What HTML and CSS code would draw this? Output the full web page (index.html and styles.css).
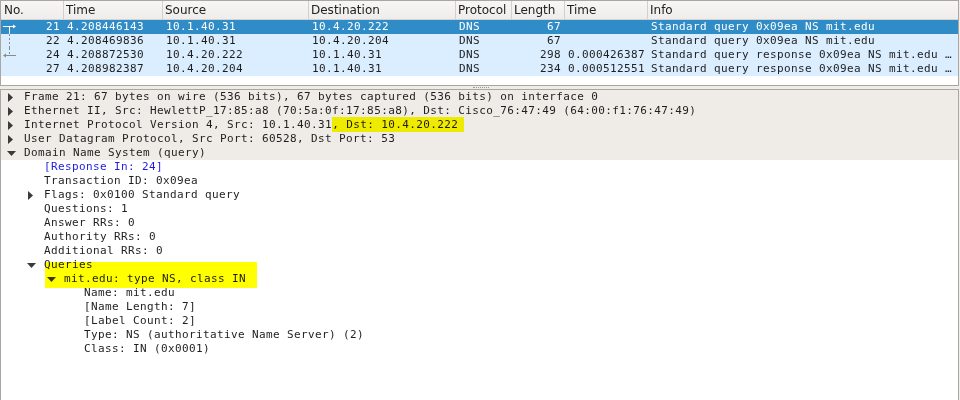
FILE: index.html
```html
<!DOCTYPE html>
<html>
<head>
<meta charset="utf-8">
<link rel="stylesheet" href="styles.css">
</head>
<body>
<div class="plist">
  <div class="phead">
    <div class="hc">No.</div>
    <div class="hc">Time</div>
    <div class="hc">Source</div>
    <div class="hc">Destination</div>
    <div class="hc">Protocol</div>
    <div class="hc">Length</div>
    <div class="hc">Time</div>
    <div class="hc">Info</div>
  </div>
  <div class="prow sel">
    <div class="c no"><svg class="rel" width="16" height="14" viewBox="0 0 16 14"><path d="M2 6.5H13M8.5 6.5V14" stroke="#fff" stroke-width="1" fill="none"/><path d="M12 4.5L15 6.5L12 8.5Z" fill="#fff"/></svg><span>21</span></div>
    <div class="c">4.208446143</div>
    <div class="c">10.1.40.31</div>
    <div class="c">10.4.20.222</div>
    <div class="c">DNS</div>
    <div class="c r">67</div>
    <div class="c"></div>
    <div class="c">Standard query 0x09ea NS mit.edu</div>
  </div>
  <div class="prow">
    <div class="c no"><svg class="rel" width="16" height="14" viewBox="0 0 16 14"><path d="M8.5 0V14" stroke="#8a8a8a" stroke-width="1" stroke-dasharray="2 2" fill="none"/></svg><span>22</span></div>
    <div class="c">4.208469836</div>
    <div class="c">10.1.40.31</div>
    <div class="c">10.4.20.204</div>
    <div class="c">DNS</div>
    <div class="c r">67</div>
    <div class="c"></div>
    <div class="c">Standard query 0x09ea NS mit.edu</div>
  </div>
  <div class="prow">
    <div class="c no"><svg class="rel" width="16" height="14" viewBox="0 0 16 14"><path d="M8.5 0V7.5" stroke="#8a8a8a" stroke-width="1" stroke-dasharray="2 2" fill="none"/><path d="M4 7.5H15" stroke="#8a8a8a" stroke-width="1" fill="none"/><path d="M2 7.5L5 5.5L5 9.5Z" fill="#8a8a8a"/></svg><span>24</span></div>
    <div class="c">4.208872530</div>
    <div class="c">10.4.20.222</div>
    <div class="c">10.1.40.31</div>
    <div class="c">DNS</div>
    <div class="c r">298</div>
    <div class="c">0.000426387</div>
    <div class="c">Standard query response 0x09ea NS mit.edu …</div>
  </div>
  <div class="prow">
    <div class="c no"><span>27</span></div>
    <div class="c">4.208982387</div>
    <div class="c">10.4.20.204</div>
    <div class="c">10.1.40.31</div>
    <div class="c">DNS</div>
    <div class="c r">234</div>
    <div class="c">0.000512551</div>
    <div class="c">Standard query response 0x09ea NS mit.edu …</div>
  </div>
  <div class="pfill"></div>
</div>
<div class="splitter"><span class="grip"></span></div>
<div class="details">
  <div class="drow top l0"><span class="tg rt"><svg width="5" height="9"><path d="M0 0L5 4.5L0 9Z"/></svg></span><span class="t">Frame 21: 67 bytes on wire (536 bits), 67 bytes captured (536 bits) on interface 0</span></div>
  <div class="drow top l0"><span class="tg rt"><svg width="5" height="9"><path d="M0 0L5 4.5L0 9Z"/></svg></span><span class="t">Ethernet II, Src: HewlettP_17:85:a8 (70:5a:0f:17:85:a8), Dst: Cisco_76:47:49 (64:00:f1:76:47:49)</span></div>
  <div class="drow top l0"><span class="tg rt"><svg width="5" height="9"><path d="M0 0L5 4.5L0 9Z"/></svg></span><span class="t">Internet Protocol Version 4, Src: 10.1.40.31<span class="hl">, Dst: 10.4.20.222</span></span></div>
  <div class="drow top l0"><span class="tg rt"><svg width="5" height="9"><path d="M0 0L5 4.5L0 9Z"/></svg></span><span class="t">User Datagram Protocol, Src Port: 60528, Dst Port: 53</span></div>
  <div class="drow top l0"><span class="tg dn"><svg width="9" height="5"><path d="M0 0H9L4.5 5Z"/></svg></span><span class="t">Domain Name System (query)</span></div>
  <div class="drow l1"><span class="tg"></span><span class="t link">[Response In: 24]</span></div>
  <div class="drow l1"><span class="tg"></span><span class="t">Transaction ID: 0x09ea</span></div>
  <div class="drow l1"><span class="tg rt"><svg width="5" height="9"><path d="M0 0L5 4.5L0 9Z"/></svg></span><span class="t">Flags: 0x0100 Standard query</span></div>
  <div class="drow l1"><span class="tg"></span><span class="t">Questions: 1</span></div>
  <div class="drow l1"><span class="tg"></span><span class="t">Answer RRs: 0</span></div>
  <div class="drow l1"><span class="tg"></span><span class="t">Authority RRs: 0</span></div>
  <div class="drow l1"><span class="tg"></span><span class="t">Additional RRs: 0</span></div>
  <div class="drow l1 hlrow"><span class="qhl"></span><span class="tg dn"><svg width="9" height="5"><path d="M0 0H9L4.5 5Z"/></svg></span><span class="t">Queries</span></div>
  <div class="drow l2"><span class="tg dn"><svg width="9" height="5"><path d="M0 0H9L4.5 5Z"/></svg></span><span class="t">mit.edu: type NS, class IN</span></div>
  <div class="drow l3"><span class="tg"></span><span class="t">Name: mit.edu</span></div>
  <div class="drow l3"><span class="tg"></span><span class="t">[Name Length: 7]</span></div>
  <div class="drow l3"><span class="tg"></span><span class="t">[Label Count: 2]</span></div>
  <div class="drow l3"><span class="tg"></span><span class="t">Type: NS (authoritative Name Server) (2)</span></div>
  <div class="drow l3"><span class="tg"></span><span class="t">Class: IN (0x0001)</span></div>
</div>
</body>
</html>
```

FILE: styles.css
```css
html, body {
  margin: 0;
  padding: 0;
}
body {
  width: 960px;
  height: 400px;
  overflow: hidden;
  background: #efebe7;
  font-family: "DejaVu Sans Mono", monospace;
  color: #1e1e1e;
}

/* packet list */
.plist {
  width: 959px;
  box-sizing: border-box;
  border: 1px solid #aaa6a1;
  background: #ffffff;
}
.phead, .prow {
  display: grid;
  grid-template-columns: 62px 99px 146px 147px 56px 53px 83px 1fr;
}
.phead {
  height: 19px;
  box-sizing: border-box;
  border-bottom: 1px solid #d6d2cd;
  background: linear-gradient(#f7f6f5, #efedeb);
  font-family: "DejaVu Sans", sans-serif;
  font-size: 12px;
  line-height: 18px;
  color: #222;
}
.hc {
  padding-left: 2px;
  border-left: 1px solid #d3cfca;
  white-space: nowrap;
  overflow: hidden;
}
.hc:first-child {
  border-left: none;
  padding-left: 3px;
}
.prow {
  height: 14px;
  background: #daeeff;
  font-size: 11px;
  letter-spacing: 0.38px;
  line-height: 14px;
  color: #1e1e1e;
}
.prow.sel {
  background: #308cc6;
  color: #ffffff;
}
.c {
  padding-left: 4px;
  white-space: pre;
  overflow: hidden;
}
.c.r {
  text-align: right;
  padding-left: 0;
  padding-right: 3px;
}
.c.no {
  display: flex;
  align-items: center;
  padding-left: 0;
  padding-right: 3px;
}
.c.no span {
  margin-left: auto;
}
.rel {
  display: block;
  flex: none;
}
.pfill {
  height: 9px;
}

/* splitter */
.splitter {
  height: 3px;
  display: flex;
  justify-content: center;
  align-items: center;
}
.grip {
  width: 16px;
  height: 0;
  border-top: 1px dotted #9c9892;
  margin-left: 2px;
}

/* details */
.details {
  width: 959px;
  height: 311px;
  box-sizing: border-box;
  border: 1px solid #aaa6a1;
  border-bottom: none;
  background: #ffffff;
  font-size: 11px;
  letter-spacing: 0.38px;
  line-height: 14px;
}
.drow {
  position: relative;
  height: 14px;
  display: flex;
  align-items: center;
  padding-left: 3px;
  white-space: pre;
}
.drow.top {
  background: #efebe7;
}
.drow.l1 { padding-left: 23px; }
.drow.l2 { padding-left: 43px; }
.drow.l3 { padding-left: 63px; }
.tg {
  width: 20px;
  height: 14px;
  flex: none;
  display: flex;
  align-items: center;
}
.tg svg {
  display: block;
  fill: #3a3a3a;
}
.tg.rt { padding-left: 4px; box-sizing: border-box; }
.tg.dn { padding-left: 3px; box-sizing: border-box; }
.t {
  line-height: 14px;
}
.link {
  color: #1c1ce0;
}
.hl {
  position: relative;
  display: inline-block;
  line-height: 14px;
}
.hl::after {
  content: "";
  position: absolute;
  left: 0;
  right: -6px;
  top: -1px;
  bottom: -3px;
  background: #ffff00;
  mix-blend-mode: multiply;
}
.qhl {
  position: absolute;
  left: 44px;
  top: 4px;
  width: 212px;
  height: 26px;
  background: #ffff00;
  mix-blend-mode: multiply;
  z-index: 2;
}
```
